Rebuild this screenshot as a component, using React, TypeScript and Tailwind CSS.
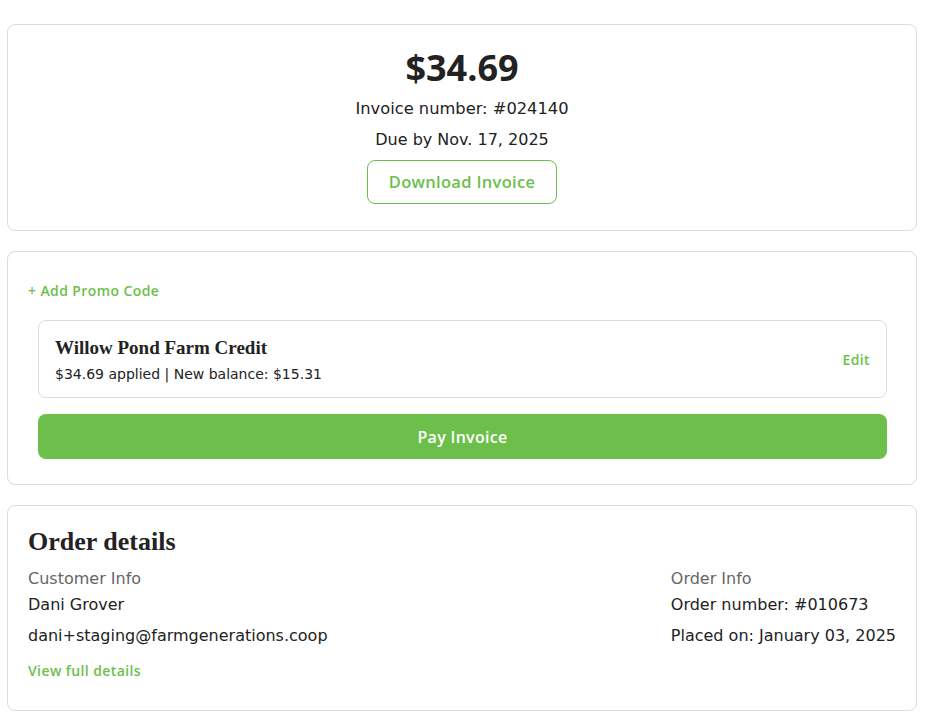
import React from "react";

const body = "font-['DejaVu_Sans',sans-serif]";
const semi = "font-['Open_Sans',sans-serif] font-semibold";
const serif = "font-['Liberation_Serif',serif] font-bold";

export default function App() {
  return (
    <div className={`min-h-screen bg-white pl-[7px] pr-[10px] pt-6 pb-3 flex flex-col gap-[20px] text-[#222] ${body}`}>
      {/* Invoice summary */}
      <div className="rounded-lg border border-[#dcdcdc] flex flex-col items-center pt-[21px] pb-[26px]">
        <div className="font-['Open_Sans',sans-serif] font-bold text-[36px] leading-[44px] text-[#222]">$34.69</div>
        <div className="mt-[7px] text-[16.3px] leading-[24px]">Invoice number: #024140</div>
        <div className="mt-[7px] text-[16px] leading-[24px]">Due by Nov. 17, 2025</div>
        <button
          className={`mt-[8px] h-[44px] w-[190px] rounded-lg border border-[#6dbf4b] bg-white text-[#6dbf4b] text-[16.5px] tracking-[0.3px] ${semi}`}
        >
          Download Invoice
        </button>
      </div>

      {/* Payment */}
      <div className="rounded-lg border border-[#dcdcdc] px-5 pt-[29px] pb-[25px] flex flex-col">
        <div className={`text-[14px] leading-[20px] text-[#6dbf4b] tracking-[0.4px] ${semi}`}>+ Add Promo Code</div>
        <div className="ml-[10px] mr-[9px] mt-[19px] h-[78px] rounded-lg border border-[#dcdcdc] px-4 flex items-center justify-between">
          <div className="flex flex-col">
            <div className={`text-[19px] leading-[26px] text-[#222] ${serif}`}>Willow Pond Farm Credit</div>
            <div className="mt-[3px] text-[14px] leading-[20px]">$34.69 applied | New balance: $15.31</div>
          </div>
          <div className={`mt-[2px] text-[14px] leading-[20px] text-[#6dbf4b] tracking-[0.4px] ${semi}`}>Edit</div>
        </div>
        <button
          className={`ml-[10px] mr-[9px] mt-[16px] h-[45px] rounded-lg bg-[#6dbf4b] text-white text-[16px] tracking-[0.3px] ${semi}`}
        >
          Pay Invoice
        </button>
      </div>

      {/* Order details */}
      <div className="rounded-lg border border-[#dcdcdc] px-5 pt-[20px] pb-[29px] flex flex-col">
        <div className={`text-[26px] leading-[32px] text-[#222] ${serif}`}>Order details</div>
        <div className="flex justify-between">
          <div className="flex flex-col">
            <div className="mt-[9px] text-[16px] leading-[24px] text-[#666]">Customer Info</div>
            <div className="mt-[2px] text-[16px] leading-[24px]">Dani Grover</div>
            <div className="mt-[7px] text-[16px] leading-[24px]">dani+staging@farmgenerations.coop</div>
            <div className={`mt-[13px] text-[14px] leading-[20px] text-[#6dbf4b] tracking-[0.4px] ${semi}`}>View full details</div>
          </div>
          <div className="flex flex-col">
            <div className="mt-[9px] text-[16px] leading-[24px] text-[#666]">Order Info</div>
            <div className="mt-[2px] text-[16px] leading-[24px]">Order number: #010673</div>
            <div className="mt-[7px] text-[16px] leading-[24px]">Placed on: January 03, 2025</div>
          </div>
        </div>
      </div>
    </div>
  );
}
